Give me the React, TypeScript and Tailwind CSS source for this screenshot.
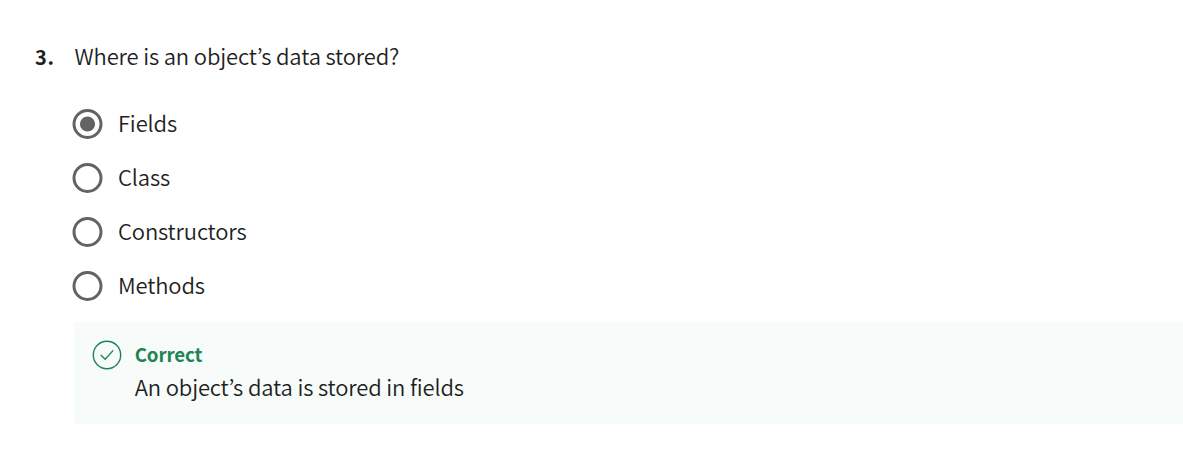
import React from "react";

const options = ["Fields", "Class", "Constructors", "Methods"];

function Radio({ checked }: { checked: boolean }) {
  return (
    <svg viewBox="0 0 31 30" className="h-[30px] w-[31px] shrink-0">
      <circle cx="15.5" cy="15" r="13.5" fill="none" stroke="#636363" strokeWidth="3" />
      {checked && <circle cx="15.5" cy="15" r="7.6" fill="#636363" />}
    </svg>
  );
}

export default function App() {
  const [selected, setSelected] = React.useState("Fields");
  return (
    <main className="h-[457px] overflow-hidden bg-white pt-[39px] font-['Noto_Sans_CJK_KR',sans-serif] text-[22px] leading-8 font-[350] tracking-[-0.15px] text-[#1f1f1f]">
      <div className="flex h-8 items-baseline">
        <span className="w-[74.5px] pl-[35px] text-[20px] font-bold tracking-[0.7px]">3.</span>
        <h2 className="whitespace-nowrap font-[350]">Where is an object’s data stored?</h2>
      </div>
      <div role="radiogroup" className="mt-[38px] flex flex-col items-start gap-6 pl-[72px]">
        {options.map((option) => (
          <button
            key={option}
            role="radio"
            aria-checked={selected === option}
            onClick={() => setSelected(option)}
            className="flex h-[30px] items-center gap-[15px]"
          >
            <Radio checked={selected === option} />
            <span className="pb-1">{option}</span>
          </button>
        ))}
      </div>
      <section className="mt-[21px] ml-[74px] flex h-[102px] bg-[#f7fcfa] pt-[18px] pl-[18px]">
        <svg viewBox="0 0 30 30" className="h-[30px] w-[30px] shrink-0" fill="none" stroke="#1f8354" strokeWidth="1.4">
          <circle cx="15" cy="15" r="13.7" />
          <path d="M8.8 14.9 L13.2 19.2 L21.2 10.4" />
        </svg>
        <div className="ml-[12.7px]">
          <p className="-mt-0.5 text-[18.7px] leading-8 font-bold tracking-[-0.1px] text-[#1f8354]">Correct</p>
          <p>An object’s data is stored in fields</p>
        </div>
      </section>
    </main>
  );
}
